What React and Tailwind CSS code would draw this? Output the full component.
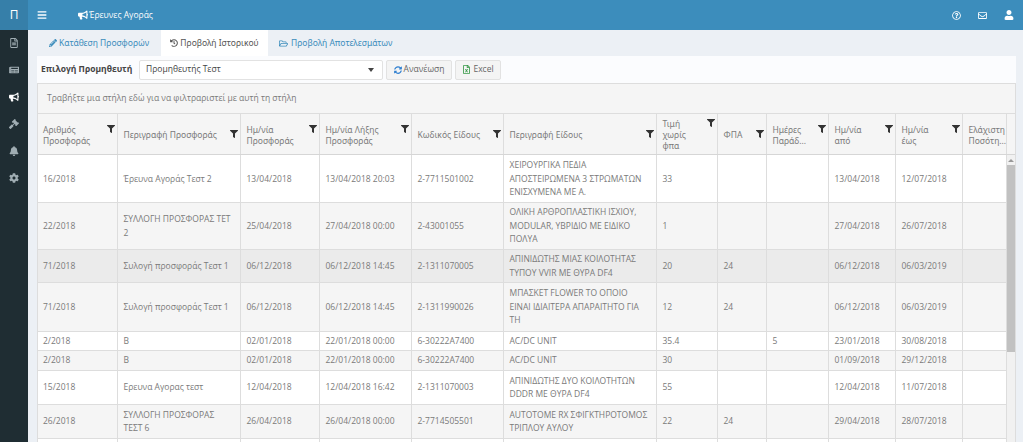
import React from "react";
import {
  FaBars,
  FaBell,
  FaBullhorn,
  FaCog,
  FaFilter,
  FaGavel,
  FaHistory,
  FaNewspaper,
  FaPencilAlt,
  FaRegEnvelope,
  FaRegFileAlt,
  FaRegFileExcel,
  FaRegFolderOpen,
  FaRegQuestionCircle,
  FaSyncAlt,
  FaUser,
} from "react-icons/fa";

// "\n" in a title is where the reference breaks the header line
const columns = [
  { title: "Αριθμός\nΠροσφοράς", w: "w-[79px]" },
  { title: "Περιγραφή Προσφοράς", w: "w-[123px]" },
  { title: "Ημ/νία\nΠροσφοράς", w: "w-[79px]" },
  { title: "Ημ/νία Λήξης\nΠροσφοράς", w: "w-[92px]" },
  { title: "Κωδικός Είδους", w: "w-[92px]" },
  { title: "Περιγραφή Είδους", w: "w-[153px]" },
  { title: "Τιμή\nχωρίς\nφπα", w: "w-[61px]" },
  { title: "ΦΠΑ", w: "w-[49px]" },
  { title: "Ημέρες\nΠαράδ...", w: "w-[62px]" },
  { title: "Ημ/νία\nαπό", w: "w-[67px]" },
  { title: "Ημ/νία\nέως", w: "w-[67px]" },
  { title: "Ελάχιστη\nΠοσότη...", w: "w-[44px]", noFilter: true },
];

const rows = [
  { h: "h-[47px]", bg: "bg-white", cells: ["16/2018", "Έρευνα Αγοράς Τεστ 2", "13/04/2018", "13/04/2018 20:03", "2-7711501002", "ΧΕΙΡΟΥΡΓΙΚΑ ΠΕΔΙΑ ΑΠΟΣΤΕΙΡΩΜΕΝΑ 3 ΣΤΡΩΜΑΤΩΝ ΕΝΙΣΧΥΜΕΝΑ ΜΕ Α.", "33", "", "", "13/04/2018", "12/07/2018", ""] },
  { h: "h-[47px]", bg: "bg-[#f5f5f5]", cells: ["22/2018", "ΣΥΛΛΟΓΗ ΠΡΟΣΦΟΡΑΣ ΤΕΤ 2", "25/04/2018", "27/04/2018 00:00", "2-43001055", "ΟΛΙΚΗ ΑΡΘΡΟΠΛΑΣΤΙΚΗ ΙΣΧΙΟΥ, MODULAR, ΥΒΡΙΔΙΟ ΜΕ ΕΙΔΙΚΟ ΠΟΛΥΑ", "1", "", "", "27/04/2018", "26/07/2018", ""] },
  { h: "h-[33px]", bg: "bg-[#ebebeb]", cells: ["71/2018", "Συλογή προσφοράς Τεστ 1", "06/12/2018", "06/12/2018 14:45", "2-1311070005", "ΑΠΙΝΙΔΩΤΗΣ ΜΙΑΣ ΚΟΙΛΟΤΗΤΑΣ ΤΥΠΟΥ VVIR ΜΕ ΘΥΡΑ DF4", "20", "24", "", "06/12/2018", "06/03/2019", ""] },
  { h: "h-[49px]", bg: "bg-[#f5f5f5]", cells: ["71/2018", "Συλογή προσφοράς Τεστ 1", "06/12/2018", "06/12/2018 14:45", "2-1311990026", "ΜΠΑΣΚΕΤ FLOWER ΤΟ ΟΠΟΙΟ ΕΙΝΑΙ ΙΔΙΑΙΤΕΡΑ ΑΠΑΡΑΙΤΗΤΟ ΓΙΑ ΤΗ", "12", "24", "", "06/12/2018", "06/03/2019", ""] },
  { h: "h-[19px]", bg: "bg-white", cells: ["2/2018", "Β", "02/01/2018", "22/01/2018 00:00", "6-30222A7400", "AC/DC UNIT", "35.4", "", "5", "23/01/2018", "30/08/2018", ""] },
  { h: "h-[20px]", bg: "bg-[#f5f5f5]", cells: ["2/2018", "Β", "02/01/2018", "22/01/2018 00:00", "6-30222A7400", "AC/DC UNIT", "30", "", "", "01/09/2018", "29/12/2018", ""] },
  { h: "h-[34px]", bg: "bg-white", cells: ["15/2018", "Ερευνα Αγορας τεστ", "12/04/2018", "12/04/2018 16:42", "2-1311070003", "ΑΠΙΝΙΔΩΤΗΣ ΔΥΟ ΚΟΙΛΟΤΗΤΩΝ DDDR ΜΕ ΘΥΡΑ DF4", "55", "", "", "12/04/2018", "11/07/2018", ""] },
  { h: "h-[34px]", bg: "bg-[#f5f5f5]", cells: ["26/2018", "ΣΥΛΛΟΓΗ ΠΡΟΣΦΟΡΑΣ ΤΕΣΤ 6", "26/04/2018", "26/04/2018 00:00", "2-7714505501", "AUTOTOME RX ΣΦΙΓΚΤΗΡΟΤΟΜΟΣ ΤΡΙΠΛΟΥ ΑΥΛΟΥ", "22", "24", "", "29/04/2018", "28/07/2018", ""] },
  { h: "h-[34px]", bg: "bg-white", cells: ["", "", "", "", "", "", "", "", "", "", "", ""] },
];

const sideIcons = [
  <FaRegFileAlt key="a" />,
  <FaNewspaper key="b" />,
  <FaBullhorn key="c" className="text-white" />,
  <FaGavel key="d" />,
  <FaBell key="e" />,
  <FaCog key="f" />,
];

const Cols = () => (
  <colgroup>
    {columns.map((c) => (
      <col key={c.title} className={c.w} />
    ))}
  </colgroup>
);

const App = () => {
  return (
    <div className="h-screen overflow-hidden flex flex-col bg-[#ecf0f5] font-['Open_Sans',sans-serif] text-[8.5px] text-[#7a7a7a]">
      {/* top bar */}
      <header className="h-[30px] shrink-0 flex items-center bg-[#3c8dbc] text-white">
        <div className="w-[28px] h-full flex items-center justify-center bg-[#367fa9] text-[12px] font-medium">
          Π
        </div>
        <FaBars className="ml-[9px] text-[10px]" />
        <div className="ml-[31px] flex items-center gap-[1px]">
          <FaBullhorn className="text-[10px]" />
          <span>Έρευνες Αγοράς</span>
        </div>
        <div className="ml-auto mr-[9px] flex items-center gap-[17px] text-[9px]">
          <FaRegQuestionCircle />
          <FaRegEnvelope />
          <FaUser className="text-[10px]" />
        </div>
      </header>

      <div className="flex-1 flex min-h-0">
        {/* sidebar */}
        <aside className="w-[28px] shrink-0 flex flex-col items-center gap-[17px] pt-[8px] bg-[#1f2d33] text-[#a0adb3] text-[10px]">
          {sideIcons}
        </aside>

        <main className="flex-1 min-w-0 pl-[9px] pr-[7px]">
          {/* tabs */}
          <div className="h-[26px] flex items-stretch font-['Noto_Sans',sans-serif]">
            <div className="w-[124px] flex items-center justify-center gap-[2px] text-[#3c8dbc]">
              <FaPencilAlt className="text-[8px] text-[#3c8dbc]" />
              Κατάθεση Προσφορών
            </div>
            <div className="w-[107px] flex items-center justify-center gap-[2px] bg-white text-[#555]">
              <FaHistory className="text-[8px]" />
              Προβολή Ιστορικού
            </div>
            <div className="flex items-center gap-[3px] ml-[11px] text-[#3c8dbc]">
              <FaRegFolderOpen className="text-[9px]" />
              Προβολή Αποτελεσμάτων
            </div>
          </div>

          {/* supplier toolbar */}
          <div className="h-[27px] flex items-center bg-[#fbfcfe]">
            <span className="ml-[4px] w-[98px] font-bold text-[#444]">Επιλογή Προμηθευτή</span>
            <div className="w-[244px] h-[20px] flex items-center justify-between px-[6px] bg-white border border-[#e2e2e2] rounded-[2px] text-[#444]">
              <span>Προμηθευτής Τεστ</span>
              <span className="w-0 h-0 mr-[2px] border-x-[3px] border-x-transparent border-t-[4px] border-t-[#444]" />
            </div>
            <button className="ml-[3px] w-[66px] h-[20px] flex items-center justify-center gap-[2px] bg-[#f4f4f4] border border-[#e2e2e2] rounded-[2px] text-[#666]">
              <FaSyncAlt className="text-[8px] text-[#2f7fd0]" />
              Ανανέωση
            </button>
            <button className="ml-[3px] w-[46px] h-[20px] flex items-center justify-center gap-[2px] bg-[#f4f4f4] border border-[#e2e2e2] rounded-[2px] text-[#666]">
              <FaRegFileExcel className="text-[9px] text-[#3a9a4a]" />
              Excel
            </button>
          </div>

          {/* grid */}
          <section className="border border-[#ddd] bg-white">
            <div className="h-[30px] flex items-center pl-[9px] bg-[#f5f5f5] border-b border-[#ddd]">
              Τραβήξτε μια στήλη εδώ για να φιλτραριστεί με αυτή τη στήλη
            </div>

            <div className="flex bg-[#f5f5f5] border-b border-[#d6d6d6]">
              <table className="table-fixed border-collapse w-[968px] shrink-0 font-['Noto_Sans',sans-serif]">
                <Cols />
                <thead>
                  <tr className="h-[40px]">
                    {columns.map((c, i) => (
                      <th key={c.title} className={`font-normal text-left align-middle pt-[1px] pr-[2px] ${i > 0 ? "pl-[6px] border-l border-[#ddd]" : "pl-[5px]"}`}>
                        <div className="flex justify-between items-start leading-[11px] whitespace-pre-line">
                          <span>{c.title}</span>
                          {!c.noFilter && <FaFilter className="shrink-0 mt-[1px] text-[8px] text-[#333]" />}
                        </div>
                      </th>
                    ))}
                  </tr>
                </thead>
              </table>
              <div className="flex-1 border-l border-[#ddd]" />
            </div>

            <div className="flex">
              <table className="table-fixed border-collapse w-[968px] shrink-0">
                <Cols />
                <tbody>
                  {rows.map((r, i) => (
                    <tr key={i} className={`${r.h} ${r.bg} border-b border-[#ddd]`}>
                      {r.cells.map((cell, j) => (
                        <td key={j} className={`py-0 leading-[13.5px] align-middle overflow-hidden pr-[6px] ${j > 0 ? "pl-[6px] border-l border-[#ddd]" : "pl-[5px]"}`}>
                          {cell}
                        </td>
                      ))}
                    </tr>
                  ))}
                </tbody>
              </table>
              <div className="flex-1 flex flex-col items-center bg-[#f1f1f1] border-l border-[#ddd]">
                <span className="mt-[4px] w-0 h-0 border-x-[3px] border-x-transparent border-b-[3px] border-b-[#999]" />
                <div className="mt-[3px] w-[8px] h-[187px] bg-[#c1c1c1]" />
              </div>
            </div>
          </section>
        </main>
      </div>
    </div>
  );
};

export default App;
